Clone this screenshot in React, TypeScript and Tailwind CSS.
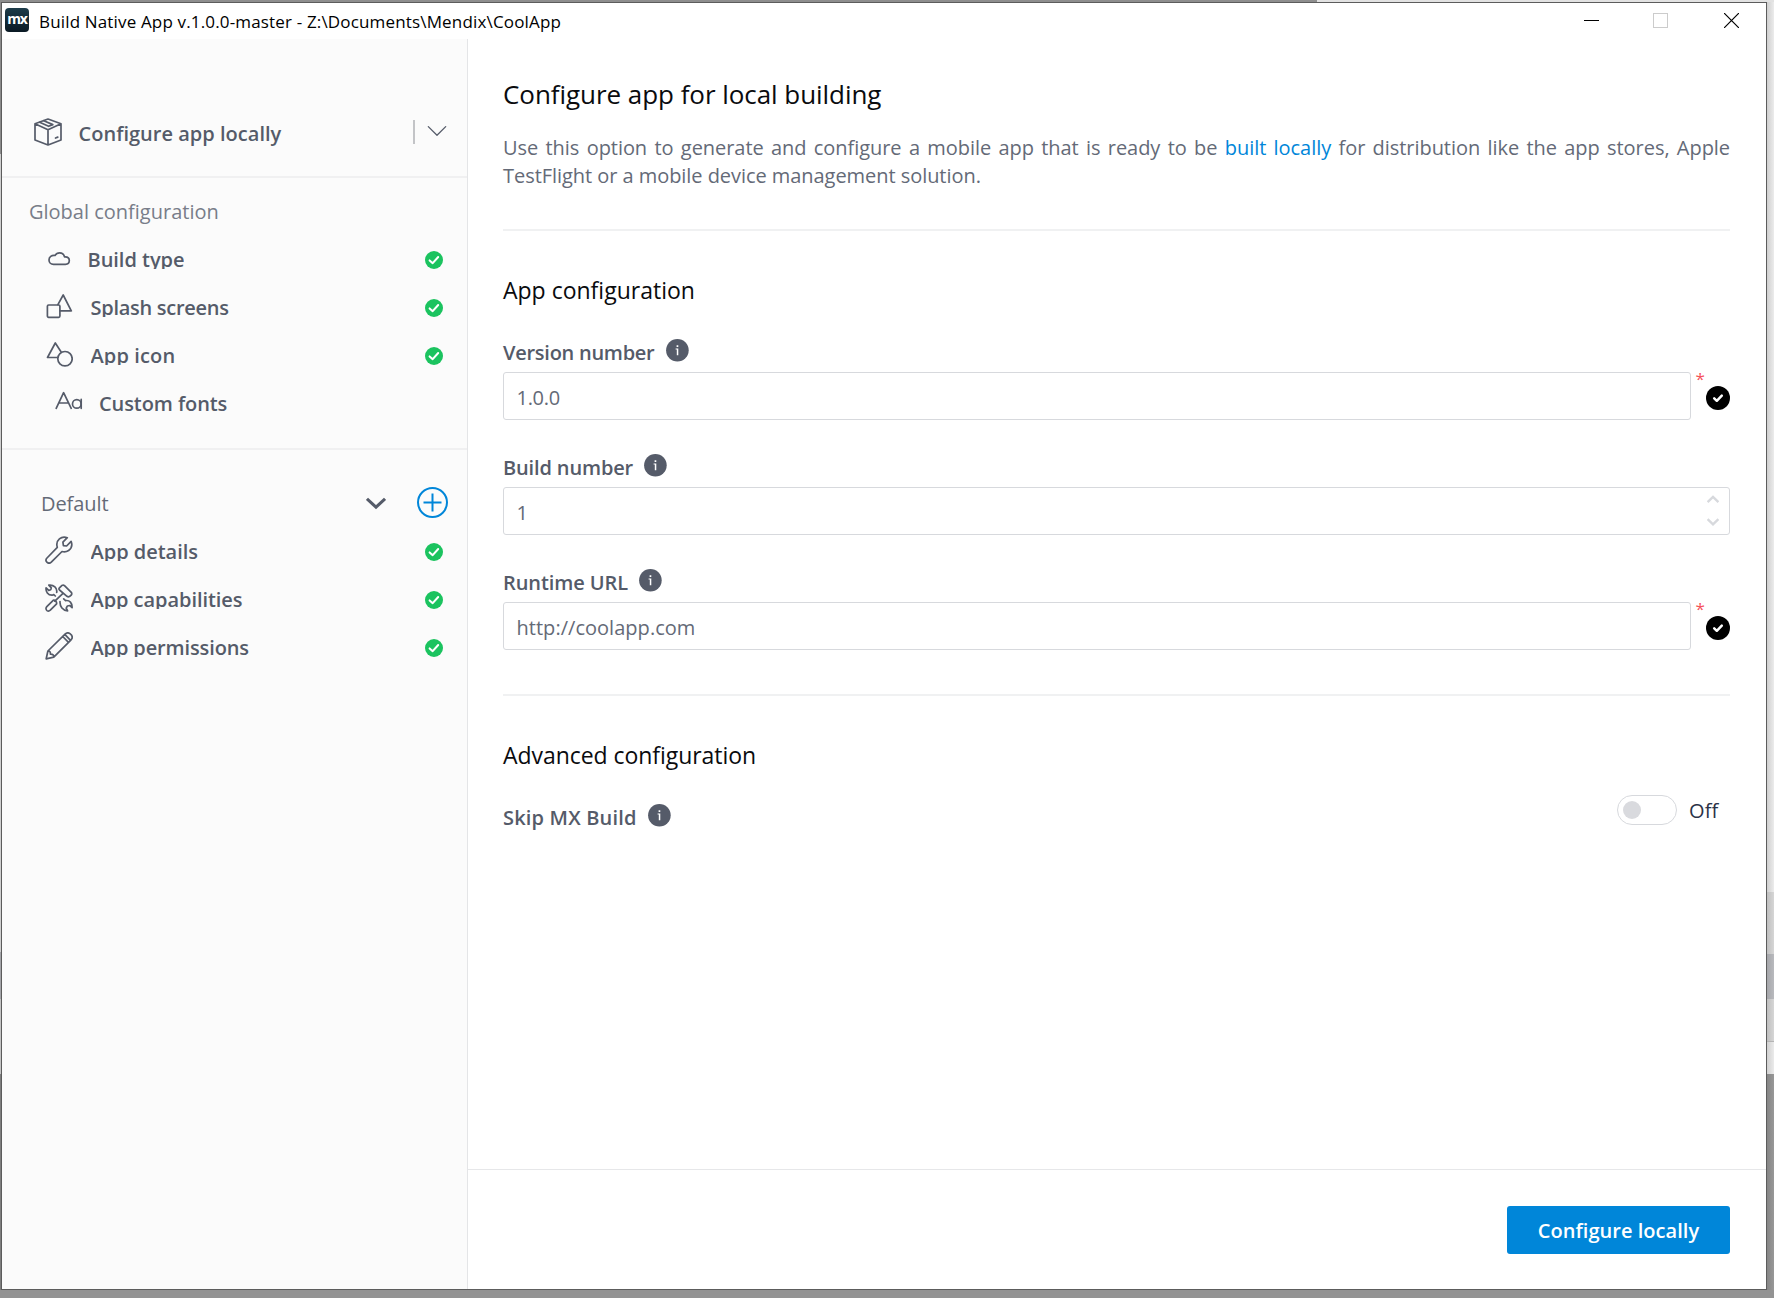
import type { ReactNode } from "react";

const stroke = {
  fill: "none",
  stroke: "currentColor",
  strokeWidth: 1.7,
  strokeLinecap: "round" as const,
  strokeLinejoin: "round" as const,
};

function Icon({ children, width = 28 }: { children: ReactNode; width?: number }) {
  return (
    <svg width={width} height={28} viewBox={`0 0 ${width} 28`} className="shrink-0 text-[#555b69]" {...stroke}>
      {children}
    </svg>
  );
}

const BoxIcon = () => (
  <Icon>
    <path d="M14 1 27 5.8V22L14 27 1 22V5.8ZM1 5.8 14 11.8 27 5.8M14 11.8V27" />
    <path d="M9.8 2.7 18.8 6.6M5.6 4.3 14.6 8.3 18.8 6.6M21.5 20 23.8 19.1" />
  </Icon>
);
const CloudIcon = () => (
  <Icon>
    <path d="M8.5 18.3H20.4C22.7 18.3 24.3 16.7 24.3 14.6 24.3 12.4 22.6 10.8 20.3 10.8H19.5C18.8 8.2 17 6.8 14.7 6.8 12.6 6.8 11 7.8 10 9.5 6.6 9 4 11 4 13.9 4 16.5 6 18.3 8.5 18.3Z" />
  </Icon>
);
const SplashIcon = () => (
  <Icon>
    <rect x="2.4" y="11" width="12.5" height="12.3" rx="1.2" />
    <path d="M12.9 10.6 18.2 1 26.3 16.8H15.2" />
  </Icon>
);
const ShapesIcon = () => (
  <Icon>
    <path d="M16 9.8 10.3 1 2.5 15.5H12" />
    <circle cx="20" cy="16.7" r="7.2" />
  </Icon>
);
const FontIcon = () => (
  <Icon width={30}>
    <path d="M2.2 18.3 9.6 2.7 17.2 18.3M4.8 13H14.6M27.2 9.4V18.3" />
    <circle cx="22.8" cy="13.9" r="4.3" />
  </Icon>
);
const WrenchIcon = () => (
  <Icon>
    <path d="M22.3 1.7 17.9 6.2 18.4 9.6 21.6 10 26.1 5.4C27.6 9 26.3 12.4 23.6 14.5 21.5 15.9 19.2 16.1 17 15.5L6.3 26.2C5 27.4 3.1 27.4 1.9 26.2.8 25 .8 23.2 2 22L12.3 11.3C11.4 8.4 12 5 14.4 2.9 16.6 1 19.6.6 22.3 1.7Z" />
  </Icon>
);
const ToolsIcon = () => (
  <Icon>
    <path d="M14.2 4.2 17 1.4Q18.3.6 19.5 1.6L26.5 8.6Q27.1 9.8 26.3 11L24.4 12.6Q23.2 13.2 22 12.3L14.5 6Q13.6 5.1 14.2 4.2ZM18 9.3 9.8 17.2" />
    <path d="M8.2 16.3 1.8 22.7C.6 24 .8 25.7 2 26.6 3.1 27.3 4.4 27 5.3 26.2L11.6 19.8Q11.9 18.4 10.7 17.1 9.4 15.8 8.2 16.3Z" />
    <path d="M11.7 8.3C12.4 3.9 8.8.6 3.8 1.2L6.3 3.8 5.7 5.8 3.7 6.4 1.1 3.8C.5 7.8 3 11.2 7 11.2L8.8 10.6 10.3 12" />
    <path d="M15 17.6C14.7 22.6 17.9 26.7 22.6 26.9L21.2 24.2 22.4 22 24.8 21.5 27.1 23.6C27.3 19 24.6 16 20.6 16.6L18.7 14.8" />
  </Icon>
);
const PencilIcon = () => (
  <Icon>
    <path d="M1.2 26.8 2.9 19 20.3 1.9C21.9.5 24 .7 25.6 2.2 27.4 3.8 27.5 6.2 26.1 7.8L8.8 25.2ZM2.9 19C4.8 18.8 5.6 19.9 5.4 22.2 7.8 22 9 23 8.8 25.2M17.7 4.5 23.5 10.3M20 2.7 25.3 8.2" />
  </Icon>
);

function StatusCheck() {
  return (
    <svg width="18" height="18" viewBox="0 0 18 18" className="mt-[15px] ml-auto shrink-0">
      <circle cx="9" cy="9" r="9" fill="#1bc35f" />
      <path d="M4.6 9.4 7.7 12.2 13.2 6" fill="none" stroke="#fff" strokeWidth="2" strokeLinecap="round" strokeLinejoin="round" />
    </svg>
  );
}

function NavRow({ icon, label, pad = "pl-[43px]", gap = "ml-[17.5px]", track = "tracking-normal", low = false, done = true }: {
  icon: ReactNode; label: string; pad?: string; gap?: string; track?: string; low?: boolean; done?: boolean;
}) {
  return (
    <div className={`flex h-12 items-start pr-[24px] ${pad}`}>
      <div className={low ? "mt-2" : "mt-2.5"}>{icon}</div>
      <span className={`mt-[11px] h-[22px] overflow-hidden text-[20px] leading-[25px] font-semibold whitespace-nowrap ${gap} ${track}`}>{label}</span>
      {done && <StatusCheck />}
    </div>
  );
}

function InfoDot() {
  return (
    <svg width="23" height="23" viewBox="0 0 23 23" className="shrink-0">
      <circle cx="11.4" cy="11.3" r="11.3" fill="#555b69" />
      <path d="M10.6 6.2h1.7v1.7h-1.7zM9.6 9.4h2.7v6.8h-1.5v-5.8h-1.2z" fill="#fff" />
    </svg>
  );
}

function Label({ text, track }: { text: string; track: string }) {
  return (
    <div className="flex h-[27px] gap-[11px]">
      <span className={`text-[20px] leading-[27px] font-semibold whitespace-nowrap ${track}`}>{text}</span>
      <InfoDot />
    </div>
  );
}

function RequiredField({ label, value, track, valueTrack }: { label: string; value: string; track: string; valueTrack: string }) {
  return (
    <div>
      <Label text={label} track={track} />
      <div className="mt-[6px] flex h-12">
        <div className={`flex-1 rounded-[3px] border border-[#d7d9dd] pt-[11px] pl-[12.5px] text-[20px] leading-[27px] text-[#646a77] ${valueTrack}`}>{value}</div>
        <span className="-mt-[5px] ml-[4.5px] w-[10.5px] text-[17px] leading-[23px] text-[#f5525a]">*</span>
        <svg width="24" height="24" viewBox="0 0 24 24" className="mt-[14px]">
          <circle cx="12" cy="12" r="12" fill="#000" />
          <path d="M8.2 12.4 10.8 14.8 15.8 9.6" fill="none" stroke="#fff" strokeWidth="2.5" strokeLinecap="round" strokeLinejoin="round" />
        </svg>
      </div>
    </div>
  );
}

function TitleBar() {
  return (
    <header className="flex h-9 shrink-0 items-start bg-white text-black">
      <div className="mt-[5px] ml-[3px] flex h-6 w-6 items-center justify-center rounded-[4px] bg-linear-to-b from-[#1d3c4a] to-[#0b1a24]">
        <span className="pb-[3px] text-[14px] leading-none font-bold tracking-[-1.2px] text-white">mx</span>
      </div>
      <span className="mt-[7px] ml-[10px] text-[17px] leading-[23px] tracking-[0.16px] whitespace-nowrap">
        Build Native App v.1.0.0-master - Z:\Documents\Mendix\CoolApp
      </span>
      <div className="mt-[10px] mr-[27px] ml-auto flex gap-[54px]">
        <svg width="15" height="15"><path d="M0 7.5H15" stroke="#000" /></svg>
        <svg width="15" height="15" className="mr-[2px]"><rect x=".5" y=".5" width="14" height="14" fill="none" stroke="#ccc" /></svg>
        <svg width="15" height="15"><path d="M0 0 15 15M15 0 0 15" stroke="#000" strokeWidth="1.2" /></svg>
      </div>
    </header>
  );
}

function Sidebar() {
  return (
    <aside className="flex w-[466px] shrink-0 flex-col border-r border-[#e4e5e7] bg-[#fbfbfb]">
      <div className="flex h-[137px] items-start pt-[79px] pr-[20px] pl-[32px]">
        <BoxIcon />
        <span className="mt-[2px] ml-[16.5px] text-[20px] leading-[27px] font-semibold tracking-[0.02px]">Configure app locally</span>
        <div className="mt-[2px] ml-auto h-6 w-0.5 bg-[#c3c4c7]" />
        <svg width="20" height="12" viewBox="0 0 20 12" className="mt-[7px] ml-[12px]" {...stroke} strokeWidth={1.3}>
          <path d="M1.3 1.6 10 10.3 18.7 1.6" />
        </svg>
      </div>
      <div className="h-0.5 bg-[#f0f0f1]" />
      <div className="pt-[20px] pl-[27px] text-[20px] leading-[27px] text-[#787d89]">Global configuration</div>
      <div className="mt-[11px]">
        <NavRow icon={<CloudIcon />} label="Build type" gap="ml-[14.5px]" track="tracking-[-0.03px]" />
        <NavRow icon={<SplashIcon />} label="Splash screens" gap="ml-[17.5px]" track="tracking-[-0.28px]" />
        <NavRow icon={<ShapesIcon />} label="App icon" track="tracking-[0.12px]" />
        <NavRow icon={<FontIcon />} label="Custom fonts" pad="pl-[52px]" gap="ml-[15px]" track="tracking-[-0.09px]" done={false} />
      </div>
      <div className="mt-5 h-0.5 bg-[#f0f0f1]" />
      <div className="mt-[26px] flex h-[52px] items-start pr-[19px] pl-[39px]">
        <span className="mt-[14px] text-[20px] leading-[27px] tracking-[-0.08px] text-[#646a77]">Default</span>
        <svg width="20" height="13" viewBox="0 0 20 13" className="mt-[21px] ml-auto" {...stroke} strokeWidth={3} strokeLinecap="butt" strokeLinejoin="miter">
          <path d="M1 1.8 10 10.2 19 1.8" />
        </svg>
        <svg width="31" height="31" viewBox="0 0 31 31" className="mt-[11px] ml-[31px]" fill="none" stroke="#0086d9" strokeWidth="2">
          <circle cx="15.5" cy="15.5" r="14.5" />
          <path d="M15.5 6.5V24.5M6.5 15.5H24.5" />
        </svg>
      </div>
      <NavRow low icon={<WrenchIcon />} label="App details" track="tracking-[-0.02px]" />
      <NavRow low icon={<ToolsIcon />} label="App capabilities" track="tracking-[-0.05px]" />
      <NavRow low icon={<PencilIcon />} label="App permissions" track="tracking-[-0.12px]" />
    </aside>
  );
}

function Main() {
  return (
    <main className="flex flex-1 flex-col bg-white">
      <div className="flex-1 pt-[37px] pr-9 pl-[35px]">
        <h1 className="text-[26px] leading-9 tracking-[-0.05px] text-[#0a0b0e]">Configure app for local building</h1>
        <p className="mt-[22px] text-justify text-[20px] leading-7 tracking-[-0.05px] text-[#646a77]">
          Use this option to generate and configure a mobile app that is ready to be <a className="text-[#0086d9]">built locally</a> for distribution like the app stores, Apple TestFlight or a mobile device management solution.
        </p>
        <div className="mt-[39px] h-0.5 bg-[#f0f1f2]" />
        <h2 className="mt-[43px] text-[23px] leading-8 text-[#0a0b0e]">App configuration</h2>
        <div className="mt-[33px] flex flex-col gap-[34px]">
          <RequiredField label="Version number" value="1.0.0" track="tracking-[-0.26px]" valueTrack="tracking-[-0.3px]" />
          <div>
            <Label text="Build number" track="tracking-[-0.14px]" />
            <div className="mt-[6px] flex h-12 items-start justify-between rounded-[3px] border border-[#d7d9dd] pt-[11px] pr-[10.5px] pl-[12.5px] text-[20px] leading-[27px] text-[#646a77]">
              1
              <svg width="12" height="32" viewBox="0 0 12 32" className="-mt-[4px]" fill="none" stroke="#d7d9dd" strokeWidth="2.4">
                <path d="M.6 7.2 6 2 11.4 7.2M.6 24.2 6 29.4 11.4 24.2" />
              </svg>
            </div>
          </div>
          <RequiredField label="Runtime URL" value="http://coolapp.com" track="tracking-[-0.08px]" valueTrack="tracking-[0.03px]" />
        </div>
        <div className="mt-11 h-0.5 bg-[#f0f1f2]" />
        <h2 className="mt-[43px] text-[23px] leading-8 tracking-[-0.05px] text-[#0a0b0e]">Advanced configuration</h2>
        <div className="mt-6 flex h-9 items-start justify-between">
          <div className="pt-[9px]">
            <Label text="Skip MX Build" track="tracking-[0.18px]" />
          </div>
          <div className="flex text-[#2b3347]">
            <div className="flex h-[30px] w-[60px] items-center rounded-full border border-[#d7d9dd] pl-[5px]">
              <div className="h-[18px] w-[18px] rounded-full bg-[#d9dade]" />
            </div>
            <span className="mt-[2px] ml-[12px] w-[41px] text-[20px] leading-[27px] tracking-[0.1px]">Off</span>
          </div>
        </div>
      </div>
      <footer className="flex h-[120px] items-start justify-end border-t border-[#e6e7e9] pt-9 pr-9">
        <button className="h-12 w-[223px] rounded-[3px] bg-[#0086d9] pt-[1px] text-[20px] leading-[27px] font-semibold tracking-[0.04px] text-white">
          Configure locally
        </button>
      </footer>
    </main>
  );
}

export default function App() {
  return (
    <div className="flex h-[1298px] w-[1774px] flex-col overflow-hidden bg-[#939393] font-['Open_Sans',sans-serif] text-[#555b69]">
      <div className="flex h-0.5 shrink-0">
        <div className="w-[1317px] bg-[#8e8e8e]" />
        <div className="flex-1 bg-[#e2e2e2]" />
      </div>
      <div className="flex h-[1288px] shrink-0">
        <div className="flex w-px flex-col">
          <div className="h-[152px] bg-[#8a8a8a]" />
          <div className="h-[798px] bg-[#cfcfcf]" />
          <div className="h-[47px] bg-[#a4a5a9]" />
          <div className="h-[75px] bg-[#c4c4c4]" />
          <div className="flex-1 bg-[#7e7e7e]" />
        </div>
        <div className="flex flex-1 flex-col border border-[#5c5c5c]">
          <TitleBar />
          <div className="flex flex-1">
            <Sidebar />
            <Main />
          </div>
        </div>
        <div className="flex w-[7px] flex-col">
          <div className="h-[890px] bg-linear-to-r from-[#cfcfcf] to-[#ececec]" />
          <div className="h-[62px] bg-linear-to-r from-[#bfbfbf] to-[#d6d6d6]" />
          <div className="h-[45px] bg-linear-to-r from-[#a5a6aa] to-[#b9babe]" />
          <div className="h-[42px] bg-linear-to-r from-[#bfbfbf] to-[#d6d6d6]" />
          <div className="h-px bg-[#b4b4b4]" />
          <div className="h-8 bg-linear-to-r from-[#d0d0d0] to-[#ebebeb]" />
          <div className="flex-1 bg-linear-to-r from-[#858585] to-[#989898]" />
        </div>
      </div>
    </div>
  );
}
